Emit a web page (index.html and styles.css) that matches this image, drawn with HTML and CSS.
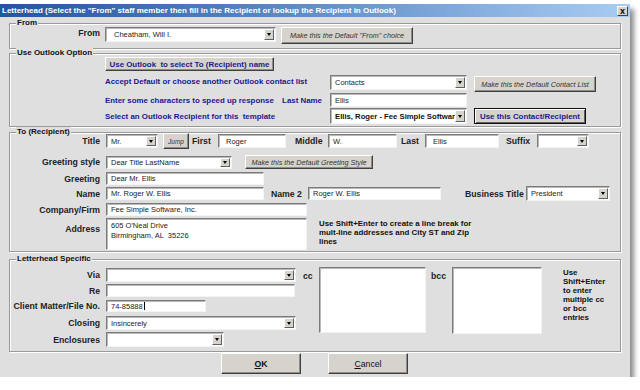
FILE: index.html
```html
<!DOCTYPE html>
<html lang="en">
<head>
    <meta charset="UTF-8">
    <title>Letterhead</title>
    <link rel="stylesheet" href="styles.css">
</head>
<body>

    <div class="dialog">
        <!-- Title bar -->
        <div class="titlebar">
            <span>Letterhead (Select the "From" staff member then fill in the Recipient or lookup the Recipient in Outlook)</span>
            <span class="close">x</span>
        </div>

        <div class="client">

            <!-- From -->
            <div class="group g-from">
                <span class="legend">From</span>
                <div class="row r-from">
                    <span class="lbl lbl-main">From</span>
                    <div class="field combo cb-from">Cheatham, Will I.<i class="arrow"></i></div>
                    <div class="btn italic btn-def-from">Make this the Default "From" choice</div>
                </div>
            </div>

            <!-- Use Outlook Option -->
            <div class="group g-outlook">
                <span class="legend">Use Outlook Option</span>
                <div class="btn navy btn-outlook">Use Outlook&nbsp; to select To (Recipient) name</div>
                <div class="row r-accept">
                    <span class="navy ol-text">Accept Default or choose another Outlook contact list</span>
                    <div class="field combo cb-contacts">Contacts<i class="arrow"></i></div>
                    <div class="btn italic btn-def-contact">Make this the Default Contact List</div>
                </div>
                <div class="row r-enter">
                    <span class="navy ol-text ol-split"><span>Enter some characters to speed up response</span><span>Last Name</span></span>
                    <div class="field fd-lastname">Ellis</div>
                </div>
                <div class="row r-select">
                    <span class="navy ol-text">Select an Outlook Recipient for this&nbsp; template</span>
                    <div class="field combo cb-recipient"><span class="clip">Ellis, Roger - Fee Simple Softwar</span><i class="arrow"></i></div>
                    <div class="btn navy default btn-use-contact">Use this Contact/Recipient</div>
                </div>
            </div>

            <!-- To (Recipient) -->
            <div class="group g-to">
                <span class="legend">To (Recipient)</span>
                <div class="row r-names">
                    <span class="lbl lbl-main">Title</span>
                    <div class="field combo cb-title">Mr.<i class="arrow"></i></div>
                    <div class="btn italic btn-jump">Jump</div>
                    <span class="lbl lbl-first">First</span>
                    <div class="field fd-first">Roger</div>
                    <span class="lbl lbl-middle">Middle</span>
                    <div class="field fd-middle">W.</div>
                    <span class="lbl lbl-last">Last</span>
                    <div class="field fd-last">Ellis</div>
                    <span class="lbl lbl-suffix">Suffix</span>
                    <div class="field combo cb-suffix"><i class="arrow"></i></div>
                </div>
                <div class="row r-gstyle">
                    <span class="lbl lbl-main">Greeting style</span>
                    <div class="field combo cb-gstyle">Dear Title LastName<i class="arrow"></i></div>
                    <div class="btn italic btn-def-greeting">Make this the Default Greeting Style</div>
                </div>
                <div class="row r-greeting">
                    <span class="lbl lbl-main">Greeting</span>
                    <div class="field fd-greeting">Dear Mr. Ellis</div>
                </div>
                <div class="row r-name">
                    <span class="lbl lbl-main">Name</span>
                    <div class="field fd-name">Mr. Roger W. Ellis</div>
                    <span class="lbl lbl-name2">Name 2</span>
                    <div class="field fd-name2">Roger W. Ellis</div>
                    <span class="lbl lbl-btitle">Business Title</span>
                    <div class="field combo cb-btitle">President<i class="arrow"></i></div>
                </div>
                <div class="row r-company">
                    <span class="lbl lbl-main">Company/Firm</span>
                    <div class="field fd-company">Fee Simple Software, Inc.</div>
                </div>
                <div class="row r-address">
                    <span class="lbl lbl-main lbl-top">Address</span>
                    <div class="field fd-address">605 O'Neal Drive
Birmingham, AL  35226</div>
                    <p class="note note-address">Use Shift+Enter to create a line break for mult-line addresses and City ST and Zip lines</p>
                </div>
            </div>

            <!-- Letterhead Specific -->
            <div class="group g-letter">
                <span class="legend">Letterhead Specific</span>
                <div class="row r-letter">
                    <div class="leftcol">
                        <div class="row r-via">
                            <span class="lbl lbl-main">Via</span>
                            <div class="field combo cb-via"><i class="arrow"></i></div>
                        </div>
                        <div class="row r-re">
                            <span class="lbl lbl-main">Re</span>
                            <div class="field fd-re"></div>
                        </div>
                        <div class="row r-client">
                            <span class="lbl lbl-main">Client Matter/File No.</span>
                            <div class="field fd-client">74-85888<span class="caret"></span></div>
                        </div>
                        <div class="row r-closing">
                            <span class="lbl lbl-main">Closing</span>
                            <div class="field combo cb-closing">Insincerely<i class="arrow"></i></div>
                        </div>
                        <div class="row r-encl">
                            <span class="lbl lbl-main">Enclosures</span>
                            <div class="field combo cb-encl"><i class="arrow"></i></div>
                        </div>
                    </div>
                    <span class="lbl lbl-cc">cc</span>
                    <div class="field list-cc"></div>
                    <span class="lbl lbl-bcc">bcc</span>
                    <div class="field list-bcc"></div>
                    <p class="note note-cc">Use Shift+Enter to enter multiple cc or bcc entries</p>
                </div>
            </div>

            <!-- Buttons -->
            <div class="footer">
                <div class="btn btn-ok"><u>O</u>K</div>
                <div class="btn btn-cancel"><u>C</u>ancel</div>
            </div>

        </div>
    </div>

</body>
</html>
```

FILE: styles.css
```css
/* Basic Styling */
body {
    margin: 0;
    background-color: #fff;
    font-family: "Liberation Sans", Arial, sans-serif;
}

/* Dialog window */
.dialog {
    width: 630px;
    height: 373px;
    margin-top: 4px;
    background-color: #dfdfdf;
    box-shadow: 4px 5px 5px rgba(0, 0, 0, 0.45);
    overflow: hidden;
}

.titlebar {
    height: 13px;
    display: flex;
    align-items: center;
    justify-content: space-between;
    padding: 0 2px;
    background: linear-gradient(to right, #24559c, #6f9bd3 60%, #a9ccf1);
    color: #fff;
    font-size: 8px;
    font-weight: bold;
}

.close {
    width: 11px;
    height: 10px;
    box-sizing: border-box;
    display: flex;
    align-items: center;
    justify-content: center;
    background-color: #d6d3cc;
    border: 1px solid;
    border-color: #fff #404040 #404040 #fff;
    color: #000;
    font-size: 9px;
    line-height: 8px;
}

.client {
    padding-top: 6px;
}

/* Group boxes */
.group {
    position: relative;
    width: 612px;
    margin-left: 9px;
    box-sizing: border-box;
    border: 1px solid #999;
    box-shadow: inset 1px 1px 0 #fff, 1px 1px 0 #fff;
}

.legend {
    position: absolute;
    top: -6px;
    left: 6px;
    padding: 0 1px;
    background-color: #dfdfdf;
    font-size: 8px;
    font-weight: bold;
    line-height: 10px;
    color: #111;
}

.g-from { height: 26px; padding-top: 3px; }
.g-outlook { height: 74px; margin-top: 4px; padding-top: 3px; }
.g-to { height: 120px; margin-top: 5px; }
.g-letter { height: 93px; margin-top: 7px; }

.row {
    display: flex;
    align-items: center;
}

/* Labels */
.lbl {
    flex: none;
    font-size: 8.7px;
    font-weight: bold;
    color: #222;
    white-space: nowrap;
}

.lbl-main {
    width: 90px;
    text-align: right;
}

.lbl-top {
    align-self: flex-start;
    padding-top: 6px;
}

/* Text boxes and combo boxes */
.field {
    flex: none;
    position: relative;
    display: flex;
    align-items: center;
    box-sizing: border-box;
    padding-left: 4px;
    background-color: #fff;
    border: 1px solid;
    border-color: #7b7b7b #f4f4f4 #f4f4f4 #7b7b7b;
    box-shadow: inset 1px 1px 0 #b8b8b8;
    font-size: 7.5px;
    color: #222;
    white-space: nowrap;
    overflow: hidden;
}

.combo {
    padding-right: 12px;
}

.arrow {
    position: absolute;
    right: 1px;
    top: 1px;
    bottom: 1px;
    width: 10px;
    box-sizing: border-box;
    display: flex;
    align-items: center;
    justify-content: center;
    background-color: #d6d3cc;
    border: 1px solid;
    border-color: #fff #606060 #606060 #fff;
}

.arrow::after {
    content: "";
    border-left: 2.5px solid transparent;
    border-right: 2.5px solid transparent;
    border-top: 3px solid #000;
}

/* Buttons */
.btn {
    flex: none;
    display: flex;
    align-items: center;
    justify-content: center;
    box-sizing: border-box;
    background-color: #d6d3cc;
    border: 1px solid;
    border-color: #fff #404040 #404040 #fff;
    box-shadow: inset -1px -1px 0 #8c8c8c;
    font-size: 8.7px;
    color: #222;
    white-space: nowrap;
}

.btn.italic {
    font-style: italic;
    font-size: 7.2px;
    color: #333;
}

.btn.default {
    border: 1px solid #111;
    box-shadow: inset 1px 1px 0 #fff, inset -1px -1px 0 #606060;
}

.navy {
    color: #1a1a8c;
    font-weight: bold;
    font-size: 7.9px;
}

/* From group */
.cb-from { width: 171px; height: 15px; margin-left: 5px; padding-left: 8px; }
.btn-def-from { width: 132px; height: 17px; margin-left: 5px; }
.r-from { align-items: flex-start; }
.r-from .lbl { line-height: 13px; }

/* Outlook group */
.btn-outlook { width: 169px; height: 14px; margin-left: 95px; }
.ol-text { width: 225px; margin-left: 95px; flex: none; white-space: nowrap; }
.ol-split { display: flex; justify-content: space-between; padding-right: 8px; box-sizing: border-box; }
.r-accept { height: 17px; margin-top: 4px; align-items: flex-start; }
.r-accept .ol-text { line-height: 14px; }
.cb-contacts { width: 137px; height: 15px; }
.btn-def-contact { width: 122px; height: 16px; margin: 1px 0 0 7px; }
.r-enter { height: 14px; margin-top: 1px; }
.fd-lastname { width: 137px; height: 14px; }
.r-select { height: 16px; margin-top: 1px; }
.cb-recipient { width: 137px; height: 16px; font-weight: bold; font-size: 7.7px; color: #111; }
.btn-use-contact { width: 112px; height: 16px; margin-left: 7px; }

/* To (Recipient) group */
.r-names { height: 16px; }
.cb-title { width: 52px; height: 14px; margin-left: 6px; }
.btn-jump { width: 26px; height: 16px; margin-left: 5px; }
.btn-jump.italic { font-size: 6.5px; }
.lbl-first { width: 26px; margin-left: 3px; }
.fd-first { width: 68px; height: 14px; padding-left: 7px; }
.lbl-middle { width: 33px; margin-left: 9px; }
.fd-middle { width: 69px; height: 14px; }
.lbl-last { width: 24px; margin-left: 4px; }
.fd-last { width: 74px; height: 14px; padding-left: 7px; }
.lbl-suffix { width: 31px; margin-left: 7px; }
.cb-suffix { width: 52px; height: 14px; }
.r-names .lbl-first,
.r-names .lbl-middle,
.r-names .lbl-last,
.r-names .lbl-suffix { align-self: flex-start; padding-top: 3px; }

.r-gstyle { height: 14px; margin-top: 6px; }
.cb-gstyle { width: 126px; height: 13px; margin-left: 6px; }
.btn-def-greeting { width: 128px; height: 14px; margin-left: 13px; }

.r-greeting { height: 13px; margin-top: 3px; }
.fd-greeting { width: 158px; height: 13px; margin-left: 6px; }

.r-name { height: 15px; margin-top: 1px; }
.fd-name { width: 158px; height: 13px; margin-left: 6px; }
.lbl-name2 { width: 37px; margin-left: 7px; }
.fd-name2 { width: 133px; height: 13px; }
.lbl-btitle { width: 61px; margin-left: 24px; }
.cb-btitle { width: 84px; height: 15px; }

.r-company { height: 13px; margin-top: 2px; }
.fd-company { width: 201px; height: 13px; margin-left: 6px; }

.r-address { align-items: flex-start; margin-top: 2px; }
.fd-address {
    width: 201px;
    height: 32px;
    margin-left: 6px;
    align-items: flex-start;
    padding-top: 2px;
    white-space: pre;
    line-height: 10px;
}

.note {
    margin: 0;
    font-size: 7.9px;
    font-weight: bold;
    line-height: 9px;
    color: #111;
}

.note-address { width: 160px; margin-left: 12px; padding-top: 1px; }

/* Letterhead Specific group */
.r-letter { align-items: flex-start; margin-top: 7px; }
.leftcol { width: 286px; flex: none; }
.r-via { height: 14px; margin-top: 1px; }
.cb-via { width: 190px; height: 14px; margin-left: 6px; }
.r-re { height: 13px; margin-top: 2px; }
.fd-re { width: 189px; height: 13px; margin-left: 6px; }
.r-client { height: 12px; margin-top: 3px; }
.fd-client { width: 100px; height: 12px; margin-left: 6px; }
.caret { width: 1px; height: 8px; background-color: #000; margin-left: 1px; }
.r-closing { height: 14px; margin-top: 4px; }
.cb-closing { width: 190px; height: 14px; margin-left: 6px; }
.r-encl { height: 15px; margin-top: 2px; }
.cb-encl { width: 118px; height: 15px; margin-left: 6px; }

.lbl-cc { width: 16px; margin-left: 7px; padding-top: 4px; }
.list-cc { width: 107px; height: 66px; }
.lbl-bcc { width: 21px; margin-left: 5px; padding-top: 4px; }
.list-bcc { width: 90px; height: 67px; }
.note-cc { width: 46px; margin-left: 21px; padding-top: 1px; }

/* OK / Cancel */
.footer {
    display: flex;
    margin-top: 1px;
}

.btn-ok,
.btn-cancel {
    width: 80px;
    height: 21px;
    font-size: 8.7px;
    color: #111;
}

.btn-ok { margin-left: 221px; font-weight: bold; }
.btn-cancel { margin-left: 27px; }
```
